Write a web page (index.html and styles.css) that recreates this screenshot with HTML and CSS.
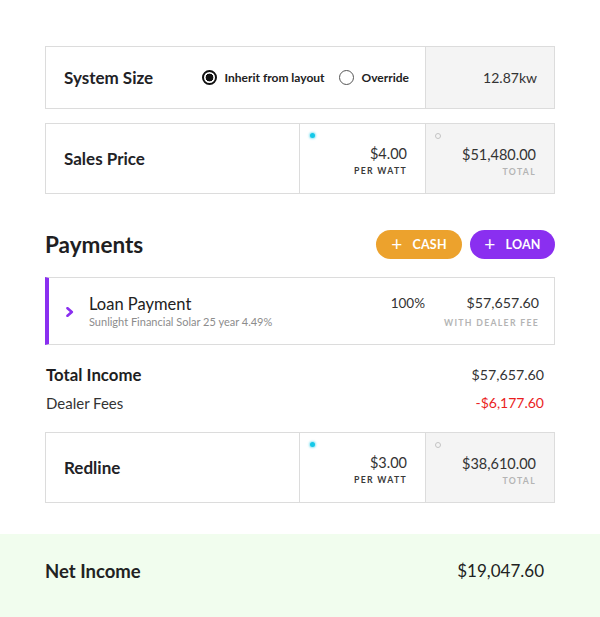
FILE: index.html
```html
<!DOCTYPE html>
<html>
<head>
<meta charset="utf-8">
<link rel="stylesheet" href="styles.css">
</head>
<body>
<div class="page">
  <div class="box size-box">
    <div class="cell main">
      <div class="label">System Size</div>
      <div class="radios">
        <span class="radio checked"></span><span class="radio-text">Inherit from layout</span>
        <span class="radio"></span><span class="radio-text last">Override</span>
      </div>
    </div>
    <div class="cell gray single">12.87kw</div>
  </div>

  <div class="box price-box">
    <div class="cell main"><div class="label">Sales Price</div></div>
    <div class="cell value-cell">
      <span class="dot cyan"></span>
      <div class="value">$4.00</div>
      <div class="cap dark">PER WATT</div>
    </div>
    <div class="cell value-cell gray">
      <span class="dot grey"></span>
      <div class="value">$51,480.00</div>
      <div class="cap">TOTAL</div>
    </div>
  </div>

  <div class="payments-head">
    <h2>Payments</h2>
    <div class="buttons">
      <button class="btn cash"><span class="plus">+</span>CASH</button>
      <button class="btn loan"><span class="plus">+</span>LOAN</button>
    </div>
  </div>

  <div class="loan-card">
    <svg class="chev" width="8" height="10" viewBox="0 0 8 10"><path d="M1.5 1.2 L5.8 5 L1.5 8.8" fill="none" stroke="#8a2ff0" stroke-width="2.6" stroke-linecap="round" stroke-linejoin="round"/></svg>
    <div class="loan-info">
      <div class="loan-title">Loan Payment</div>
      <div class="loan-sub">Sunlight Financial Solar 25 year 4.49%</div>
    </div>
    <div class="loan-pct">100%</div>
    <div class="loan-amt">
      <div class="loan-value">$57,657.60</div>
      <div class="cap">WITH DEALER FEE</div>
    </div>
  </div>

  <div class="line total">
    <span>Total Income</span><span class="amt">$57,657.60</span>
  </div>
  <div class="line fees">
    <span>Dealer Fees</span><span class="amt red">-$6,177.60</span>
  </div>

  <div class="box price-box redline">
    <div class="cell main"><div class="label">Redline</div></div>
    <div class="cell value-cell">
      <span class="dot cyan"></span>
      <div class="value">$3.00</div>
      <div class="cap dark">PER WATT</div>
    </div>
    <div class="cell value-cell gray">
      <span class="dot grey"></span>
      <div class="value">$38,610.00</div>
      <div class="cap">TOTAL</div>
    </div>
  </div>
</div>
<div class="net">
  <span class="net-label">Net Income</span><span class="net-amt">$19,047.60</span>
</div>
</body>
</html>
```

FILE: styles.css
```css
* { box-sizing: border-box; }
html, body { margin: 0; padding: 0; background: #fff; }
body {
  font-family: Lato, "Open Sans", sans-serif;
  color: #2a2a2e;
}
.page {
  padding: 46px 45px 0 45px;
}
.box {
  display: flex;
  border: 1px solid #dcdcdc;
  width: 510px;
}
.size-box { height: 63px; }
.price-box { height: 71px; margin-top: 14px; }
.cell { display: flex; white-space: nowrap; }
.main {
  flex: 1;
  align-items: center;
  padding-left: 18px;
  padding-right: 16px;
  min-width: 0;
}
.label {
  font-size: 17px;
  font-weight: 700;
  color: #222226;
}
.radios {
  display: flex;
  align-items: center;
  margin-left: auto;
}
.radio {
  flex: none;
  width: 15px;
  height: 15px;
  border-radius: 50%;
  border: 1.5px solid #555;
  display: inline-block;
}
.radio.checked {
  border: 2px solid #111;
  background: radial-gradient(circle, #111 0 3.6px, #fff 4.2px);
}
.radio-text {
  font-size: 12px;
  font-weight: 700;
  margin-left: 8px;
  margin-right: 14px;
  color: #222;
}
.radio-text.last { margin-right: 0; }
.gray { background: #f4f4f4; }
.single {
  width: 129px;
  flex: none;
  border-left: 1px solid #dcdcdc;
  justify-content: flex-end;
  align-items: center;
  padding-right: 17px;
  font-size: 14px;
  color: #333;
}
.value-cell {
  flex: none;
  flex-direction: column;
  align-items: flex-end;
  border-left: 1px solid #dcdcdc;
  padding: 9px 18px 0 8px;
  width: 126px;
}
.value-cell.gray { width: 129px; }
.dot {
  align-self: flex-start;
  width: 5px;
  height: 5px;
  border-radius: 50%;
}
.dot.cyan { background: #14c8e8; box-shadow: 0 0 2px 1px rgba(20,200,232,0.45); margin-left: 2px; }
.dot.grey { background: #f4f4f4; border: 1.2px solid #c4c4c4; width: 6px; height: 6px; margin-left: 1px; }
.value {
  font-size: 14.5px;
  line-height: 18px;
  margin-top: 7px;
  color: #333;
}
.cap {
  font-size: 8.7px;
  font-weight: 700;
  letter-spacing: 1.3px;
  color: #b4b4b4;
  margin-top: 2px;
  line-height: 11px;
}
.cap.dark { color: #3a3a3a; }
.payments-head {
  display: flex;
  align-items: center;
  justify-content: space-between;
  margin-top: 35px;
  height: 30px;
}
h2 {
  margin: 0;
  font-size: 22.5px;
  font-weight: 700;
  color: #1e1e22;
}
.buttons { display: flex; gap: 8px; }
.btn {
  border: none;
  height: 29px;
  border-radius: 15px;
  color: #fff;
  font-family: inherit;
  font-weight: 700;
  font-size: 12.5px;
  letter-spacing: 0.2px;
  display: flex;
  align-items: center;
  justify-content: center;
  padding: 0;
}
.btn .plus { font-size: 19px; font-weight: 400; margin-right: 10px; line-height: 1; margin-top: -2px; }
.cash { background: #eca22d; width: 86px; }
.loan { background: #8a2ff0; width: 85px; }
.loan-card {
  margin-top: 18px;
  width: 510px;
  height: 68px;
  border: 1px solid #dcdcdc;
  border-left: 4px solid #8a2ff0;
  display: flex;
  align-items: center;
}
.chev { margin-left: 17px; margin-top: 1px; }
.loan-info { margin-left: 15px; flex: 1; }
.loan-title { font-size: 16.5px; color: #222; line-height: 20px; }
.loan-sub { font-size: 11px; color: #8c8c8c; margin-top: 1px; }
.loan-pct { font-size: 13.5px; color: #333; align-self: flex-start; margin-top: 17px; margin-right: 19px; }
.loan-amt {
  display: flex;
  flex-direction: column;
  align-items: flex-end;
  padding-right: 15px;
  width: 110px;
}
.loan-value { font-size: 14.2px; color: #333; line-height: 18px; }
.loan-amt .cap { margin-top: 5px; }
.line {
  display: flex;
  justify-content: space-between;
  align-items: center;
  width: 498px;
  margin-left: 1px;
  font-size: 15px;
}
.total { margin-top: 20px; font-weight: 700; color: #1e1e22; line-height: 20px; font-size: 16.8px; }
.total .amt { font-weight: 400; color: #333; font-size: 14.2px; }
.fees { margin-top: 8px; line-height: 20px; color: #333; }
.fees .amt { font-size: 14px; }
.red { color: #ea1e1e; }
.redline { margin-top: 19px; }
.net {
  margin-top: 31px;
  background: #f1fdee;
  height: 90px;
  display: flex;
  justify-content: space-between;
  align-items: flex-start;
  padding: 26px 56px 0 45px;
  color: #222;
}
.net-label { font-weight: 700; font-size: 18.5px; line-height: 22px; }
.net-amt { font-size: 17px; line-height: 22px; }
```
